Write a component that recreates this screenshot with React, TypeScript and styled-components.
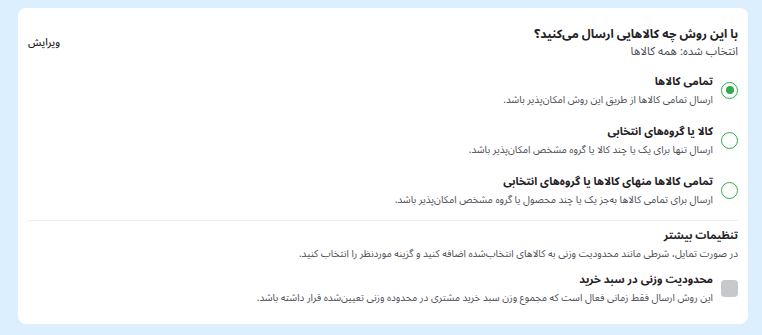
import React from "react";
import styled, { createGlobalStyle } from "styled-components";

const Global = createGlobalStyle`
  html, body { margin: 0; padding: 0; background: #dcefff; }
  body { font-family: "Noto Sans Arabic", "Vazirmatn", "DejaVu Sans", sans-serif; }
  * { box-sizing: border-box; }
`;

const Page = styled.div`
  padding: 8px 14px 11px 18px;
  direction: rtl;
`;

const Card = styled.div`
  background: #ffffff;
  border-radius: 8px;
  padding: 18px 10px 14px 10px;
  height: 316px;
`;

const Header = styled.div`
  display: flex;
  align-items: center;
  justify-content: space-between;
`;

const HeaderText = styled.div`
  display: flex;
  flex-direction: column;
`;

const Title = styled.div`
  font-size: 12px;
  font-weight: 700;
  color: #1f2126;
  line-height: 18px;
`;

const Sub = styled.div`
  font-size: 11.5px;
  color: #4a4d55;
  line-height: 15px;
`;

const EditLink = styled.button`
  border: none;
  background: none;
  padding: 0;
  font-family: inherit;
  font-size: 10.5px;
  font-weight: 500;
  color: #1f2126;
  cursor: pointer;
`;

const Options = styled.div`
  display: flex;
  flex-direction: column;
  gap: 16px;
  margin-top: 14px;
`;

const Option = styled.label`
  display: flex;
  align-items: center;
  gap: 8px;
`;

const Radio = styled.span<{ $on?: boolean }>`
  width: 17px;
  height: 17px;
  border-radius: 50%;
  border: 1.5px solid #2faa4c;
  display: flex;
  align-items: center;
  justify-content: center;
  flex: none;
  &::after {
    content: "";
    width: 8px;
    height: 8px;
    border-radius: 50%;
    background: ${(p) => (p.$on ? "#2faa4c" : "transparent")};
  }
`;

const Check = styled.span`
  width: 17px;
  height: 17px;
  border-radius: 4px;
  background: #c5c8cd;
  flex: none;
`;

const OptText = styled.div`
  display: flex;
  flex-direction: column;
  gap: 2px;
`;

const OptTitle = styled.div`
  font-size: 11px;
  font-weight: 700;
  color: #1f2126;
  line-height: 17px;
`;

const Desc = styled.div`
  font-size: 10px;
  color: #4a4d55;
  line-height: 15px;
`;

const Divider = styled.hr`
  border: none;
  border-top: 1px solid #eeeff1;
  margin: 13px 0 6px;
`;

const Section = styled.div`
  display: flex;
  flex-direction: column;
  gap: 2px;
`;

const CheckRow = styled(Option)`
  margin-top: 10px;
`;

const options = [
  {
    title: "تمامی کالاها",
    desc: "ارسال تمامی کالاها از طریق این روش امکان‌پذیر باشد.",
    on: true,
  },
  {
    title: "کالا یا گروه‌های انتخابی",
    desc: "ارسال تنها برای یک یا چند کالا یا گروه مشخص امکان‌پذیر باشد.",
    on: false,
  },
  {
    title: "تمامی کالاها منهای کالاها یا گروه‌های انتخابی",
    desc: "ارسال برای تمامی کالاها به‌جز یک یا چند محصول یا گروه مشخص امکان‌پذیر باشد.",
    on: false,
  },
];

export default function App() {
  return (
    <Page>
      <Global />
      <Card>
        <Header>
          <HeaderText>
            <Title>با این روش چه کالاهایی ارسال می‌کنید؟</Title>
            <Sub>انتخاب شده: همه کالاها</Sub>
          </HeaderText>
          <EditLink>ویرایش</EditLink>
        </Header>
        <Options>
          {options.map((o) => (
            <Option key={o.title}>
              <Radio $on={o.on} />
              <OptText>
                <OptTitle>{o.title}</OptTitle>
                <Desc>{o.desc}</Desc>
              </OptText>
            </Option>
          ))}
        </Options>
        <Divider />
        <Section>
          <OptTitle>تنظیمات بیشتر</OptTitle>
          <Desc>
            در صورت تمایل، شرطی مانند محدودیت وزنی به کالاهای انتخاب‌شده اضافه کنید و گزینه موردنظر را انتخاب کنید.
          </Desc>
        </Section>
        <CheckRow>
          <Check />
          <OptText>
            <OptTitle>محدودیت وزنی در سبد خرید</OptTitle>
            <Desc>
              این روش ارسال فقط زمانی فعال است که مجموع وزن سبد خرید مشتری در محدوده وزنی تعیین‌شده قرار داشته باشد.
            </Desc>
          </OptText>
        </CheckRow>
      </Card>
    </Page>
  );
}
